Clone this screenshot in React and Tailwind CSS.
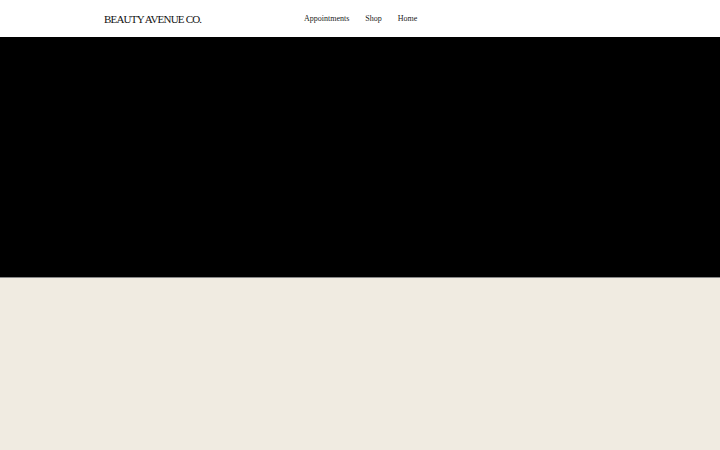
export default function App() {
  return (
    <div className="w-[720px] h-[450px] overflow-hidden bg-[#f0ebe1]">
      <header className="h-[37px] bg-white flex items-center">
        <div className="w-[104px]" />
        <div className="w-[200px] text-[11px] text-[#111] tracking-[-0.8px] pt-[1px]" style={{fontFamily: '"Liberation Serif", serif'}}>BEAUTY AVENUE CO.</div>
        <nav className="flex gap-[16px] text-[8px] text-[#222] font-medium" style={{fontFamily: '"Liberation Serif", serif'}}>
          <span>Appointments</span>
          <span>Shop</span>
          <span>Home</span>
        </nav>
      </header>
      <div className="h-[240px] bg-black" />
      <div className="h-[1px] bg-[#888]" />
    </div>
  );
}
